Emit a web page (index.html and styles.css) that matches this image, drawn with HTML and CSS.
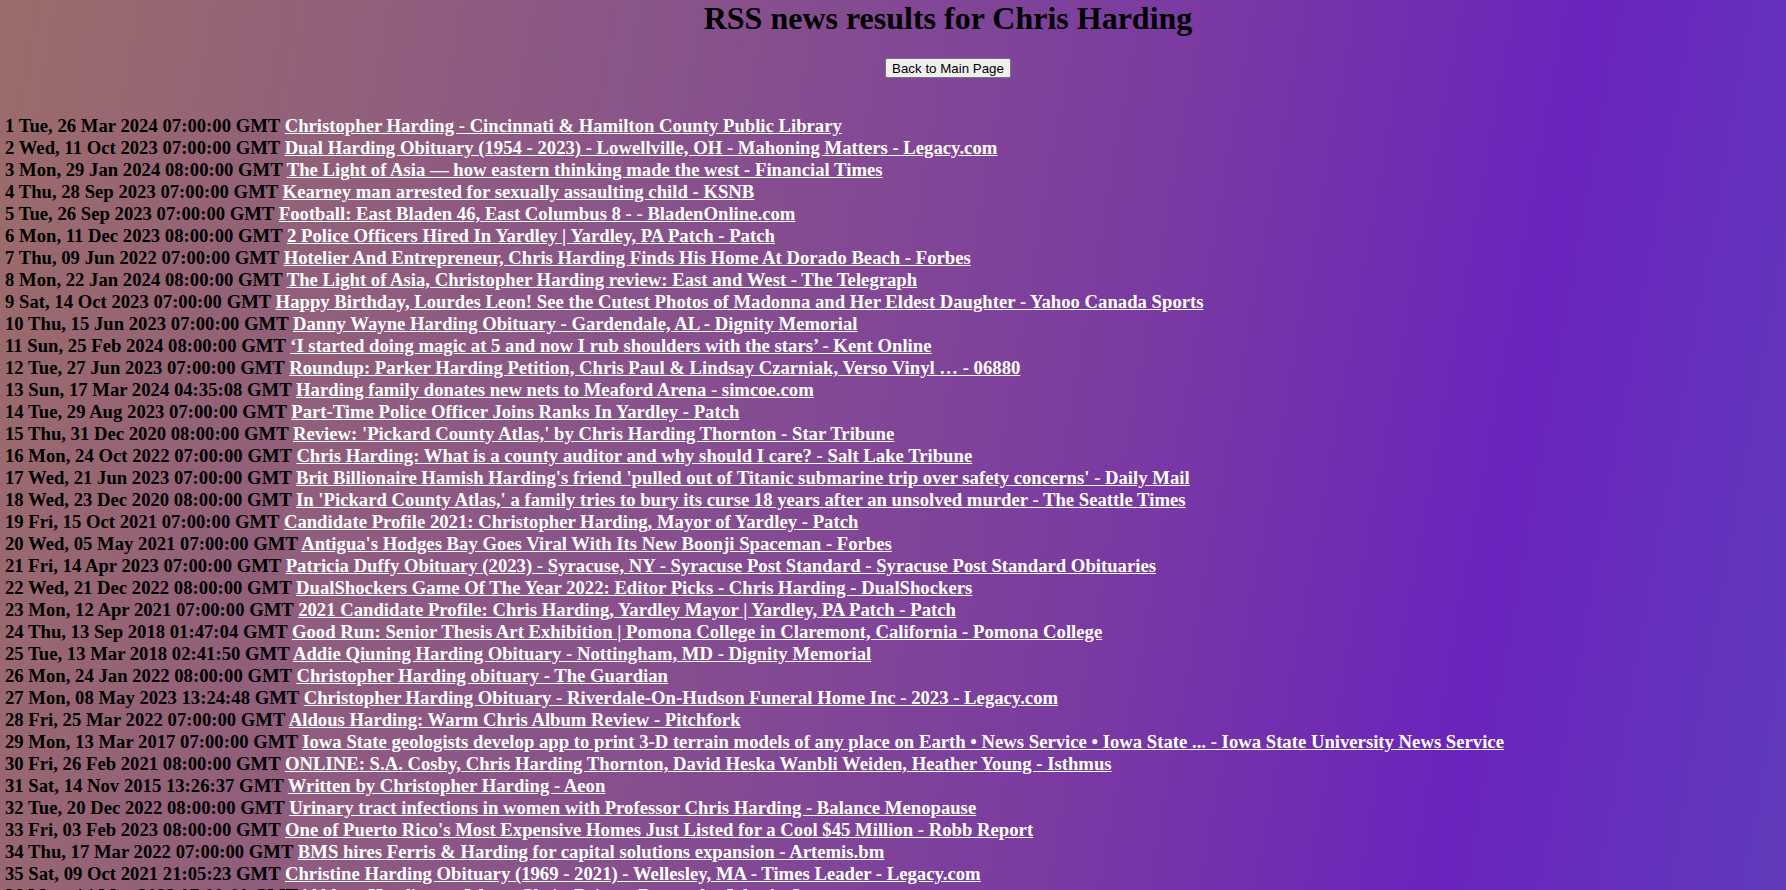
FILE: index.html
```html
<!DOCTYPE html>
<html>
<head>
<meta charset="utf-8">
<title>RSS news results for Chris Harding</title>
<link rel="stylesheet" href="styles.css">
</head>
<body>
<div class="page">
  <div class="head">
    <h1 class="title">RSS news results for Chris Harding</h1>
    <div class="nav"><button class="back">Back to Main Page</button></div>
  </div>
  <div class="results">
    <div class="row">1 Tue, 26 Mar 2024 07:00:00 GMT <a href="#">Christopher Harding - Cincinnati &amp; Hamilton County Public Library</a></div>
    <div class="row">2 Wed, 11 Oct 2023 07:00:00 GMT <a href="#">Dual Harding Obituary (1954 - 2023) - Lowellville, OH - Mahoning Matters - Legacy.com</a></div>
    <div class="row">3 Mon, 29 Jan 2024 08:00:00 GMT <a href="#">The Light of Asia — how eastern thinking made the west - Financial Times</a></div>
    <div class="row">4 Thu, 28 Sep 2023 07:00:00 GMT <a href="#">Kearney man arrested for sexually assaulting child - KSNB</a></div>
    <div class="row">5 Tue, 26 Sep 2023 07:00:00 GMT <a href="#">Football: East Bladen 46, East Columbus 8 - - BladenOnline.com</a></div>
    <div class="row">6 Mon, 11 Dec 2023 08:00:00 GMT <a href="#">2 Police Officers Hired In Yardley | Yardley, PA Patch - Patch</a></div>
    <div class="row">7 Thu, 09 Jun 2022 07:00:00 GMT <a href="#">Hotelier And Entrepreneur, Chris Harding Finds His Home At Dorado Beach - Forbes</a></div>
    <div class="row">8 Mon, 22 Jan 2024 08:00:00 GMT <a href="#">The Light of Asia, Christopher Harding review: East and West - The Telegraph</a></div>
    <div class="row">9 Sat, 14 Oct 2023 07:00:00 GMT <a href="#">Happy Birthday, Lourdes Leon! See the Cutest Photos of Madonna and Her Eldest Daughter - Yahoo Canada Sports</a></div>
    <div class="row">10 Thu, 15 Jun 2023 07:00:00 GMT <a href="#">Danny Wayne Harding Obituary - Gardendale, AL - Dignity Memorial</a></div>
    <div class="row">11 Sun, 25 Feb 2024 08:00:00 GMT <a href="#">‘I started doing magic at 5 and now I rub shoulders with the stars’ - Kent Online</a></div>
    <div class="row">12 Tue, 27 Jun 2023 07:00:00 GMT <a href="#">Roundup: Parker Harding Petition, Chris Paul &amp; Lindsay Czarniak, Verso Vinyl … - 06880</a></div>
    <div class="row">13 Sun, 17 Mar 2024 04:35:08 GMT <a href="#">Harding family donates new nets to Meaford Arena - simcoe.com</a></div>
    <div class="row">14 Tue, 29 Aug 2023 07:00:00 GMT <a href="#">Part-Time Police Officer Joins Ranks In Yardley - Patch</a></div>
    <div class="row">15 Thu, 31 Dec 2020 08:00:00 GMT <a href="#">Review: 'Pickard County Atlas,' by Chris Harding Thornton - Star Tribune</a></div>
    <div class="row">16 Mon, 24 Oct 2022 07:00:00 GMT <a href="#">Chris Harding: What is a county auditor and why should I care? - Salt Lake Tribune</a></div>
    <div class="row">17 Wed, 21 Jun 2023 07:00:00 GMT <a href="#">Brit Billionaire Hamish Harding's friend 'pulled out of Titanic submarine trip over safety concerns' - Daily Mail</a></div>
    <div class="row">18 Wed, 23 Dec 2020 08:00:00 GMT <a href="#">In 'Pickard County Atlas,' a family tries to bury its curse 18 years after an unsolved murder - The Seattle Times</a></div>
    <div class="row">19 Fri, 15 Oct 2021 07:00:00 GMT <a href="#">Candidate Profile 2021: Christopher Harding, Mayor of Yardley - Patch</a></div>
    <div class="row">20 Wed, 05 May 2021 07:00:00 GMT <a href="#">Antigua's Hodges Bay Goes Viral With Its New Boonji Spaceman - Forbes</a></div>
    <div class="row">21 Fri, 14 Apr 2023 07:00:00 GMT <a href="#">Patricia Duffy Obituary (2023) - Syracuse, NY - Syracuse Post Standard - Syracuse Post Standard Obituaries</a></div>
    <div class="row">22 Wed, 21 Dec 2022 08:00:00 GMT <a href="#">DualShockers Game Of The Year 2022: Editor Picks - Chris Harding - DualShockers</a></div>
    <div class="row">23 Mon, 12 Apr 2021 07:00:00 GMT <a href="#">2021 Candidate Profile: Chris Harding, Yardley Mayor | Yardley, PA Patch - Patch</a></div>
    <div class="row">24 Thu, 13 Sep 2018 01:47:04 GMT <a href="#">Good Run: Senior Thesis Art Exhibition | Pomona College in Claremont, California - Pomona College</a></div>
    <div class="row">25 Tue, 13 Mar 2018 02:41:50 GMT <a href="#">Addie Qiuning Harding Obituary - Nottingham, MD - Dignity Memorial</a></div>
    <div class="row">26 Mon, 24 Jan 2022 08:00:00 GMT <a href="#">Christopher Harding obituary - The Guardian</a></div>
    <div class="row">27 Mon, 08 May 2023 13:24:48 GMT <a href="#">Christopher Harding Obituary - Riverdale-On-Hudson Funeral Home Inc - 2023 - Legacy.com</a></div>
    <div class="row">28 Fri, 25 Mar 2022 07:00:00 GMT <a href="#">Aldous Harding: Warm Chris Album Review - Pitchfork</a></div>
    <div class="row">29 Mon, 13 Mar 2017 07:00:00 GMT <a href="#">Iowa State geologists develop app to print 3-D terrain models of any place on Earth • News Service • Iowa State ... - Iowa State University News Service</a></div>
    <div class="row">30 Fri, 26 Feb 2021 08:00:00 GMT <a href="#">ONLINE: S.A. Cosby, Chris Harding Thornton, David Heska Wanbli Weiden, Heather Young - Isthmus</a></div>
    <div class="row">31 Sat, 14 Nov 2015 13:26:37 GMT <a href="#">Written by Christopher Harding - Aeon</a></div>
    <div class="row">32 Tue, 20 Dec 2022 08:00:00 GMT <a href="#">Urinary tract infections in women with Professor Chris Harding - Balance Menopause</a></div>
    <div class="row">33 Fri, 03 Feb 2023 08:00:00 GMT <a href="#">One of Puerto Rico's Most Expensive Homes Just Listed for a Cool $45 Million - Robb Report</a></div>
    <div class="row">34 Thu, 17 Mar 2022 07:00:00 GMT <a href="#">BMS hires Ferris &amp; Harding for capital solutions expansion - Artemis.bm</a></div>
    <div class="row">35 Sat, 09 Oct 2021 21:05:23 GMT <a href="#">Christine Harding Obituary (1969 - 2021) - Wellesley, MA - Times Leader - Legacy.com</a></div>
    <div class="row">36 Mon, 14 Mar 2022 07:00:00 GMT <a href="#">'Aldous Harding on Warm Chris, Being a Dog and a Joker' - Stereogum</a></div>
  </div>
</div>
</body>
</html>
```
FILE: styles.css
```css
html, body {
  margin: 0;
  padding: 0;
}
html {
  overflow: hidden;
}
body {
  min-height: 100vh;
  background: linear-gradient(100deg, #9c6c6a 0%, #8a5588 33%, #7a3aa2 62%, #6b23bd 82%, #5f3bbb 100%);
  background-attachment: fixed;
  font-family: "Liberation Serif", "Times New Roman", serif;
  color: #000;
}
.page {
  padding: 0 0 0 5px;
}
.head {
  padding-left: 105px;
}
.title {
  margin: 0;
  text-align: center;
  font-size: 32px;
  font-weight: bold;
}
.nav {
  text-align: center;
  margin-top: 21px;
}
.back {
  font-family: "Liberation Sans", Arial, sans-serif;
  font-size: 13.33px;
  height: 20px;
  padding: 1px 6px;
  background: #efefef;
  border: 1px solid #767676;
  border-radius: 2px;
  color: #000;
}
.results {
  margin-top: 37px;
}
.row {
  font-size: 18.7px;
  font-weight: bold;
  line-height: 22px;
  white-space: nowrap;
}
.row a {
  color: #fff;
  text-decoration: underline;
}
```
